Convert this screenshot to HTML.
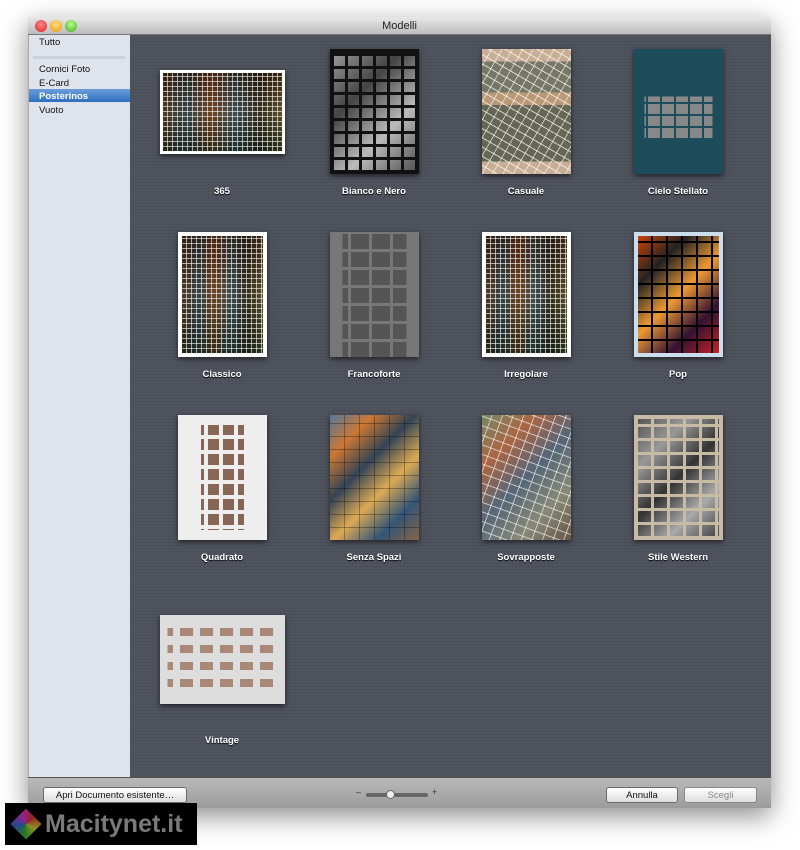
<!DOCTYPE html>
<html><head><meta charset="utf-8"><style>
*{margin:0;padding:0;box-sizing:border-box}
body{width:800px;height:850px;background:#fff;position:relative;overflow:hidden;font-family:"Liberation Sans",sans-serif}
.win{position:absolute;left:28px;top:17px;width:743px;height:791px;box-shadow:0 8px 25px rgba(0,0,0,.45);background:#a9a9a9}
.title{position:absolute;left:0;top:0;width:743px;height:18px;background:linear-gradient(#e8e8e8,#bcbcbc);border-bottom:1px solid #777;text-align:center;font-size:11px;line-height:18px;color:#222}
.dot{position:absolute;top:3px;width:12px;height:12px;border-radius:50%}
.side{position:absolute;left:1px;top:18px;width:101px;height:742px;background:#dfe4ec}
.side div{position:absolute;left:10px;font-size:9.5px;color:#111}
.main{position:absolute;left:102px;top:18px;width:641px;height:742px;background:#4e525c;background-image:repeating-linear-gradient(90deg,rgba(255,255,255,.025) 0 1px,transparent 1px 4px),repeating-linear-gradient(0deg,rgba(0,0,0,.05) 0 1px,transparent 1px 3px)}
.bot{position:absolute;left:0;top:760px;width:743px;height:31px;background:linear-gradient(#b9b9b9,#9c9c9c);border-top:1px solid #555}
.btn{position:absolute;top:9px;height:16px;border:1px solid #6b6b6b;border-radius:3px;background:linear-gradient(#fff,#ddd);font-size:9.5px;text-align:center;line-height:15px;color:#111}
.t{position:absolute;box-shadow:0 2px 5px rgba(0,0,0,.6)}
.lab{position:absolute;width:152px;text-align:center;font-size:9.5px;font-weight:bold;color:#fff;text-shadow:0 1px 1px #000}
.mos{position:absolute;background-color:#776;background-image:repeating-linear-gradient(90deg,transparent 0 4px,rgba(255,255,255,.6) 4px 5px),repeating-linear-gradient(0deg,transparent 0 4px,rgba(255,255,255,.6) 4px 5px),linear-gradient(90deg,#853,#567,#b63,#678,#543,#974),linear-gradient(#654,#9a9,#465)}
.mos{background-blend-mode:normal,normal,multiply,normal}
</style></head><body>
<div class="win">
<div class="title">Modelli
<div class="dot" style="left:7px;background:radial-gradient(circle at 50% 35%,#f88,#d22)"></div>
<div class="dot" style="left:22px;background:radial-gradient(circle at 50% 35%,#fd8,#e90)"></div>
<div class="dot" style="left:37px;background:radial-gradient(circle at 50% 35%,#bf8,#4a2)"></div>
</div>
<div class="side">
<div style="top:2px">Tutto</div>
<div style="left:4px;top:21px;width:92px;height:3px;background:#cdd2da"></div>
<div style="top:29px">Cornici Foto</div>
<div style="top:43px">E-Card</div>
<div style="left:0;top:54px;width:101px;height:13px;background:linear-gradient(#6b9ed8,#2f6ec0)"></div>
<div style="top:56px;color:#fff;font-weight:bold">Posterinos</div>
<div style="top:70px">Vuoto</div>
</div>
<div class="main"></div>
<div class="bot">
<div class="btn" style="left:15px;width:144px">Apri Documento esistente…</div>
<div style="position:absolute;left:328px;top:9px;font-size:9px;color:#333">–</div>
<div style="position:absolute;left:338px;top:15px;width:62px;height:4px;border-radius:2px;background:#666"></div>
<div style="position:absolute;left:358px;top:12px;width:9px;height:9px;border-radius:50%;background:#eee;border:1px solid #666"></div>
<div style="position:absolute;left:404px;top:9px;font-size:9px;color:#333">+</div>
<div class="btn" style="left:578px;width:72px">Annulla</div>
<div class="btn" style="left:656px;width:73px;color:#888;border-color:#888">Scegli</div>
</div>
</div>
<!-- thumbnails -->
<div class="t mos" style="left:160px;top:70px;width:125px;height:84px;border:3px solid #fff"></div>
<div class="t" style="left:330px;top:49px;width:89px;height:125px;border:4px solid #111;background-color:#555;background-image:repeating-linear-gradient(90deg,transparent 0 11px,#111 11px 14px),repeating-linear-gradient(0deg,transparent 0 10px,#111 10px 13px),linear-gradient(135deg,#999,#444,#bbb,#555)"></div>
<div class="t" style="left:482px;top:49px;width:89px;height:125px;background-color:#c8ad90;background-image:repeating-linear-gradient(30deg,transparent 0 7px,rgba(255,255,255,.7) 7px 8px),repeating-linear-gradient(120deg,transparent 0 8px,rgba(255,255,255,.6) 8px 9px),linear-gradient(#c7ae95 0 10%,#776 10% 35%,#b97 35% 45%,#665 45% 90%,#c7ae95 90%)"></div>
<div class="t" style="left:634px;top:49px;width:89px;height:125px;background:#1d4d5a;background-image:repeating-linear-gradient(90deg,transparent 0 12px,#1d4d5a 12px 14px),repeating-linear-gradient(0deg,transparent 0 10px,#1d4d5a 10px 12px),linear-gradient(90deg,#1d4d5a 0 12%,transparent 12% 88%,#1d4d5a 88%),linear-gradient(#1d4d5a 0 38%,#888 38% 72%,#1d4d5a 72%)"></div>
<div class="t mos" style="left:178px;top:232px;width:89px;height:125px;border:4px solid #fff"></div>
<div class="t" style="left:330px;top:232px;width:89px;height:125px;background:linear-gradient(#999,#666);background-image:repeating-linear-gradient(90deg,transparent 0 18px,#777 18px 21px),repeating-linear-gradient(0deg,transparent 0 15px,#777 15px 18px),linear-gradient(90deg,#777 0 14%,#555 14% 86%,#777 86%),linear-gradient(#888,#666)"></div>
<div class="t mos" style="left:482px;top:232px;width:89px;height:125px;border:4px solid #fff"></div>
<div class="t" style="left:634px;top:232px;width:89px;height:125px;border:4px solid #cde;background-image:repeating-linear-gradient(90deg,transparent 0 13px,#000 13px 15px),repeating-linear-gradient(0deg,transparent 0 12px,#000 12px 14px),linear-gradient(135deg,#c40,#222,#e93,#313,#c22)"></div>
<div class="t" style="left:178px;top:415px;width:89px;height:125px;background:#eee;background-image:repeating-linear-gradient(90deg,transparent 0 11px,#eee 11px 15px),repeating-linear-gradient(0deg,transparent 0 11px,#eee 11px 15px),linear-gradient(90deg,#eee 0 26%,transparent 26% 74%,#eee 74%),linear-gradient(#eee 0 8%,#865 8% 92%,#eee 92%)"></div>
<div class="t" style="left:330px;top:415px;width:89px;height:125px;background-image:repeating-linear-gradient(90deg,transparent 0 14px,rgba(0,0,0,.3) 14px 15px),repeating-linear-gradient(0deg,transparent 0 12px,rgba(0,0,0,.3) 12px 13px),linear-gradient(135deg,#579,#c73,#345,#da5,#357,#864)"></div>
<div class="t" style="left:482px;top:415px;width:89px;height:125px;background-image:repeating-linear-gradient(20deg,transparent 0 8px,rgba(255,255,255,.6) 8px 9px),repeating-linear-gradient(110deg,transparent 0 9px,rgba(255,255,255,.6) 9px 10px),linear-gradient(135deg,#786,#a64,#567,#887,#654)"></div>
<div class="t" style="left:634px;top:415px;width:89px;height:125px;border:4px solid #c8bba6;background-image:repeating-linear-gradient(90deg,transparent 0 13px,#c8bba6 13px 16px),repeating-linear-gradient(0deg,transparent 0 11px,#c8bba6 11px 14px),linear-gradient(135deg,#555,#999,#333,#aaa,#444)"></div>
<div class="t" style="left:160px;top:615px;width:125px;height:89px;background:#ddd;background-image:repeating-linear-gradient(90deg,transparent 0 13px,#ddd 13px 20px),repeating-linear-gradient(0deg,transparent 0 8px,#ddd 8px 17px),linear-gradient(90deg,#ddd 0 6%,transparent 6% 94%,#ddd 94%),linear-gradient(#ddd 0 10%,#a87 10% 90%,#ddd 90%)"></div>
<div class="lab" style="left:146px;top:186px">365</div>
<div class="lab" style="left:298px;top:186px">Bianco e Nero</div>
<div class="lab" style="left:450px;top:186px">Casuale</div>
<div class="lab" style="left:602px;top:186px">Cielo Stellato</div>
<div class="lab" style="left:146px;top:369px">Classico</div>
<div class="lab" style="left:298px;top:369px">Francoforte</div>
<div class="lab" style="left:450px;top:369px">Irregolare</div>
<div class="lab" style="left:602px;top:369px">Pop</div>
<div class="lab" style="left:146px;top:552px">Quadrato</div>
<div class="lab" style="left:298px;top:552px">Senza Spazi</div>
<div class="lab" style="left:450px;top:552px">Sovrapposte</div>
<div class="lab" style="left:602px;top:552px">Stile Western</div>
<div class="lab" style="left:146px;top:735px">Vintage</div>
<div style="position:absolute;left:5px;top:803px;width:192px;height:42px;background:#000">
<div style="position:absolute;left:10px;top:10px;width:22px;height:22px;transform:rotate(45deg);background:conic-gradient(#c33,#cc3,#3a3,#36c,#c3c,#c33);opacity:.7"></div>
<div style="position:absolute;left:40px;top:7px;font-size:25px;font-weight:bold;color:#7a7a7a">Macitynet.it</div>
</div>
</body></html>
